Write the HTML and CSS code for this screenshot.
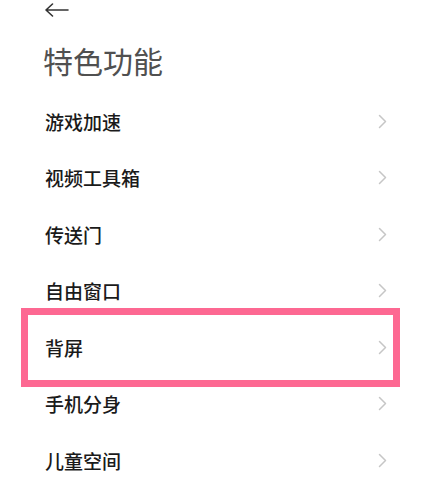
FILE: index.html
```html
<!DOCTYPE html>
<html lang="zh">
<head>
<meta charset="utf-8">
<title>特色功能</title>
<link rel="stylesheet" href="styles.css">
</head>
<body>
<div class="page">
  <div class="topbar">
    <svg class="back" width="24" height="14" viewBox="0 0 24 14"><path d="M1 7H23M7.5 1L1 7L7.5 13" fill="none" stroke="#333" stroke-width="1.6" stroke-linecap="round" stroke-linejoin="round"/></svg>
  </div>
  <h1 class="title">特色功能</h1>
  <ul class="list">
    <li class="row"><span>游戏加速</span><svg class="chev" width="9" height="15" viewBox="0 0 9 15"><path d="M1.5 1.5L7.5 7.5L1.5 13.5" fill="none" stroke="#c6c6c6" stroke-width="1.5" stroke-linecap="round" stroke-linejoin="round"/></svg></li>
    <li class="row"><span>视频工具箱</span><svg class="chev" width="9" height="15" viewBox="0 0 9 15"><path d="M1.5 1.5L7.5 7.5L1.5 13.5" fill="none" stroke="#c6c6c6" stroke-width="1.5" stroke-linecap="round" stroke-linejoin="round"/></svg></li>
    <li class="row"><span>传送门</span><svg class="chev" width="9" height="15" viewBox="0 0 9 15"><path d="M1.5 1.5L7.5 7.5L1.5 13.5" fill="none" stroke="#c6c6c6" stroke-width="1.5" stroke-linecap="round" stroke-linejoin="round"/></svg></li>
    <li class="row"><span>自由窗口</span><svg class="chev" width="9" height="15" viewBox="0 0 9 15"><path d="M1.5 1.5L7.5 7.5L1.5 13.5" fill="none" stroke="#c6c6c6" stroke-width="1.5" stroke-linecap="round" stroke-linejoin="round"/></svg></li>
    <li class="row highlight"><span>背屏</span><svg class="chev" width="9" height="15" viewBox="0 0 9 15"><path d="M1.5 1.5L7.5 7.5L1.5 13.5" fill="none" stroke="#c6c6c6" stroke-width="1.5" stroke-linecap="round" stroke-linejoin="round"/></svg></li>
    <li class="row"><span>手机分身</span><svg class="chev" width="9" height="15" viewBox="0 0 9 15"><path d="M1.5 1.5L7.5 7.5L1.5 13.5" fill="none" stroke="#c6c6c6" stroke-width="1.5" stroke-linecap="round" stroke-linejoin="round"/></svg></li>
    <li class="row"><span>儿童空间</span><svg class="chev" width="9" height="15" viewBox="0 0 9 15"><path d="M1.5 1.5L7.5 7.5L1.5 13.5" fill="none" stroke="#c6c6c6" stroke-width="1.5" stroke-linecap="round" stroke-linejoin="round"/></svg></li>
  </ul>
</div>
</body>
</html>
```
FILE: styles.css
```css
html, body {
  margin: 0;
  padding: 0;
  background: #ffffff;
}
body {
  font-family: "Noto Sans CJK SC", "Noto Sans", sans-serif;
  width: 423px;
  height: 491px;
  overflow: hidden;
}
.page {
  display: flex;
  flex-direction: column;
}
.topbar {
  height: 28px;
  padding: 3px 0 0 45px;
  box-sizing: border-box;
}
.back {
  display: block;
}
.title {
  margin: 14px 0 0 43px;
  font-size: 30px;
  line-height: 36px;
  font-weight: 400;
  color: #505050;
}
.list {
  list-style: none;
  margin: 15px 0 0 0;
  padding: 0;
}
.row {
  height: 56.5px;
  display: flex;
  align-items: center;
  justify-content: space-between;
  padding: 0 36px 0 45px;
  font-size: 19px;
  font-weight: 500;
  color: #1a1a1a;
  position: relative;
}
.chev {
  display: block;
}
.highlight::after {
  content: "";
  position: absolute;
  left: 21px;
  right: 23px;
  top: -11px;
  bottom: -11px;
  border: 7px solid #fd6892;
  pointer-events: none;
}
```
